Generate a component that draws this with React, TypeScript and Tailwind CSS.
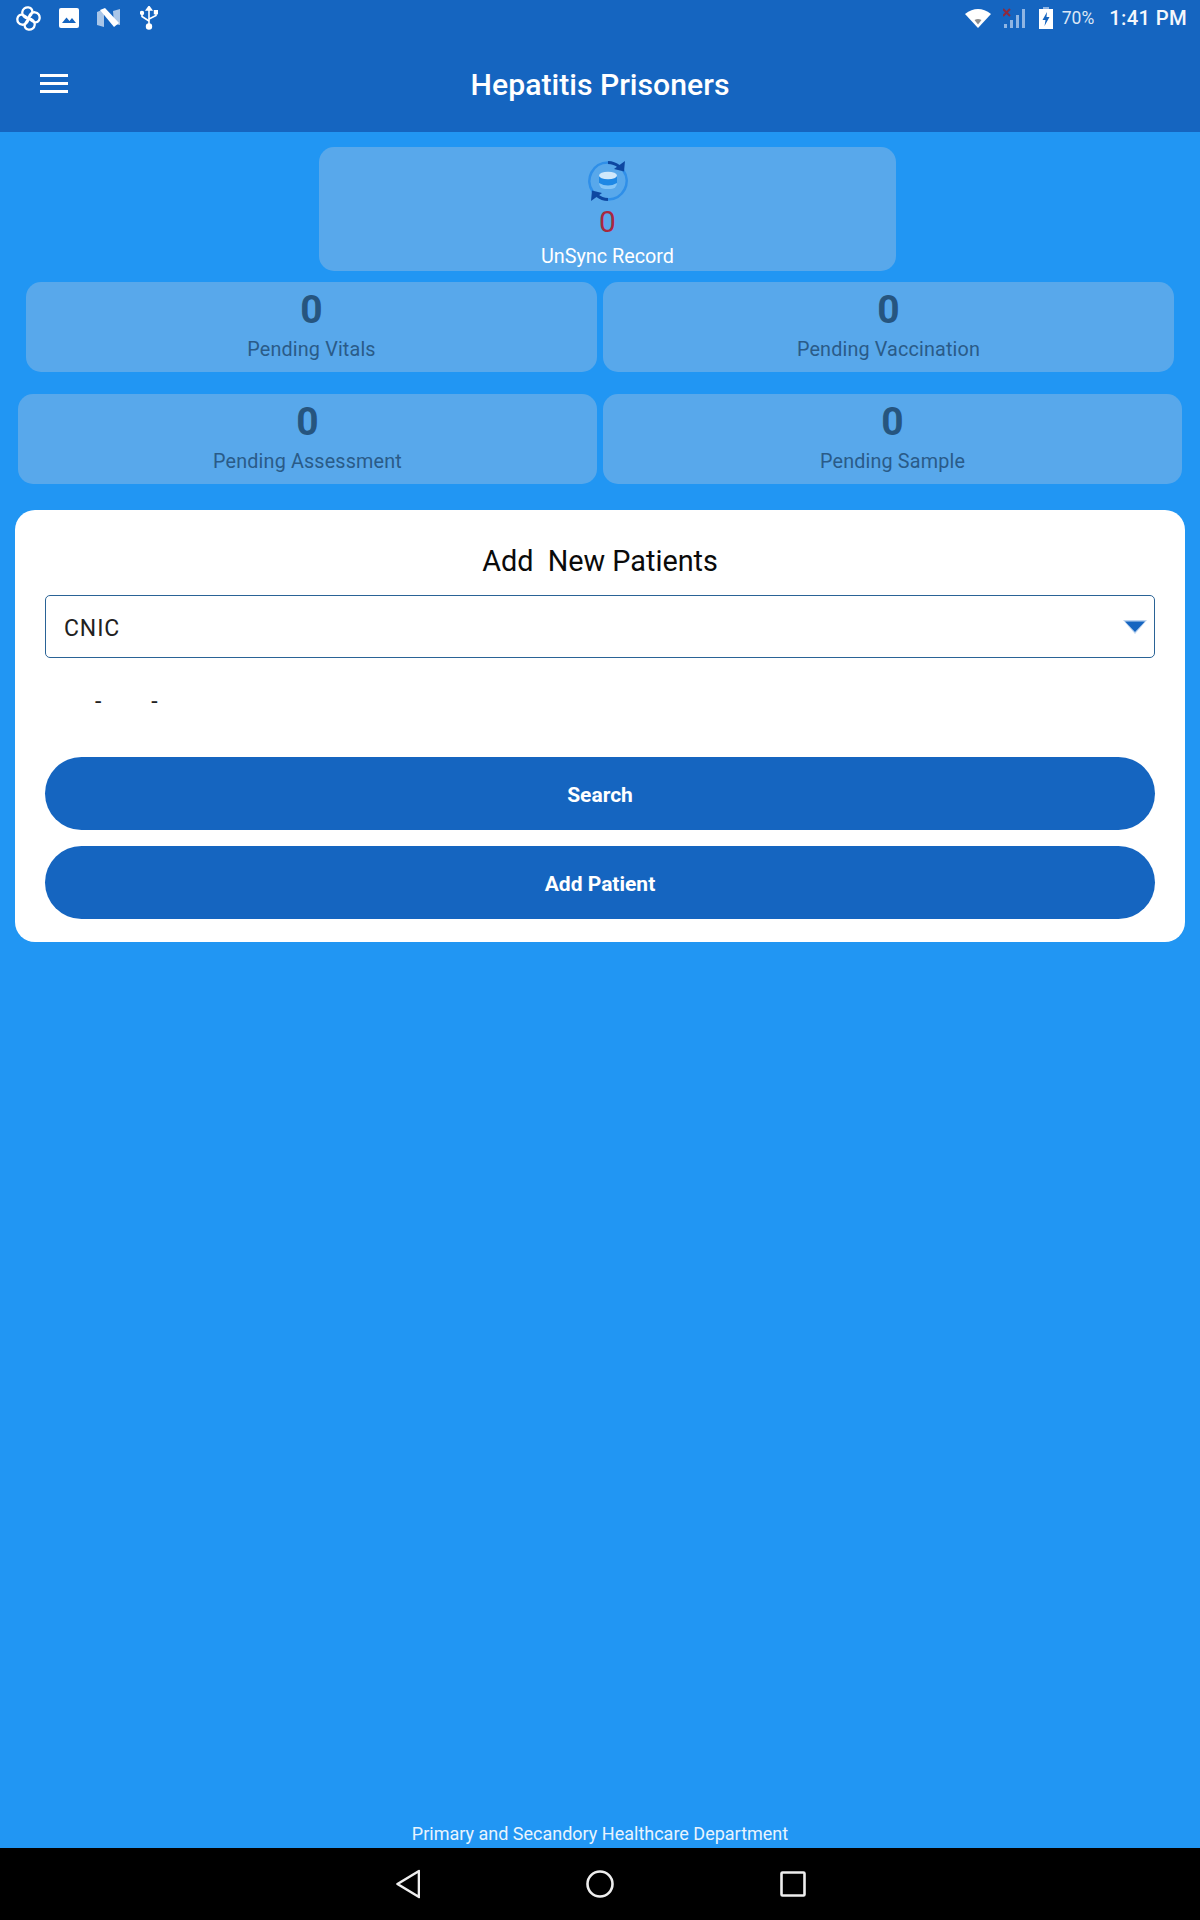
import React from "react";

const font = { fontFamily: "Roboto, 'Liberation Sans', sans-serif" };

function StatCard({ label, className }: { label: string; className: string }) {
  return (
    <div className={`h-[90px] rounded-[15px] bg-[#58a8eb] flex flex-col items-center ${className}`}>
      <div className="text-[39px] leading-[44px] font-bold text-[#26557f] mt-[6px]">0</div>
      <div className="text-[19.800px] leading-[24px] tracking-[0.15px] text-[#2a5b88] mt-[6px]">{label}</div>
    </div>
  );
}

function PinwheelIcon() {
  const blade = "M12.500 12.500 C8.500 12 6 9.500 6.300 6 C6.600 2.800 9.500 1 12.500 1.400 C15.500 1.800 17 4.500 16 7 C15.300 8.800 13.800 10.500 12.500 12.500 Z";
  return (
    <svg width="25" height="25" viewBox="0 0 25 25" fill="none" stroke="white" strokeWidth="2.300" strokeLinejoin="round">
      <path d={blade} />
      <path d={blade} transform="rotate(90 12.500 12.500)" />
      <path d={blade} transform="rotate(180 12.500 12.500)" />
      <path d={blade} transform="rotate(270 12.500 12.500)" />
    </svg>
  );
}

function SyncIcon() {
  return (
    <svg width="40" height="40" viewBox="0 0 40 40" fill="none">
      <path d="M5 31 A18.500 18.500 0 0 1 20 1.500" stroke="#2f8fe8" strokeWidth="2.600" />
      <path d="M35 9 A18.500 18.500 0 0 1 20 38.500" stroke="#2f8fe8" strokeWidth="2.600" />
      <path d="M20 1.500 A18.500 18.500 0 0 1 31 5.500" stroke="#0d47a1" strokeWidth="3" />
      <path d="M20 38.500 A18.500 18.500 0 0 1 9 34.500" stroke="#0d47a1" strokeWidth="3" />
      <path d="M37 0 L36 10.500 L26 8 Z" fill="#0d47a1" />
      <path d="M3 40 L4 29.500 L14 32 Z" fill="#0d47a1" />
      <rect x="11" y="14" width="18" height="14" rx="6" fill="#86c6f7" />
      <path d="M11 15 Q20 21 29 15 V22 Q20 27 11 22 Z" fill="#1e88e5" />
      <ellipse cx="20" cy="14.500" rx="9" ry="3.800" fill="#cfe8fb" />
    </svg>
  );
}

export default function App() {
  return (
    <div style={font} className="w-[1200px] h-[1920px] flex flex-col bg-[#2196f3] overflow-hidden">
      <header className="h-[132px] bg-[#1565c0] flex flex-col shrink-0">
        <div className="h-[36px] flex items-center pl-[16px] pr-[13px] text-white">
          <PinwheelIcon />
          <svg className="ml-[18px]" width="20" height="20" viewBox="0 0 20 20">
            <rect width="20" height="20" rx="2" fill="white" />
            <path d="M3 15 L7.500 9.500 L10.500 13 L13 10 L17 15 Z" fill="#1565c0" />
          </svg>
          <svg className="ml-[18px]" width="23" height="20" viewBox="0 0 23 20">
            <path d="M0 4 L7 1 V19 L0 17 Z" fill="#a9c6e8" />
            <path d="M16 3 L23 1 V17 L17 16 Z" fill="#a9c6e8" />
            <path d="M3 2 L8 0 L22 15 L17 19 Z" fill="white" />
          </svg>
          <svg className="ml-[20px]" width="18" height="24" viewBox="0 0 18 24" fill="none" stroke="white" strokeWidth="1.600">
            <path d="M9 2 V20" />
            <path d="M6.500 4 L9 0.500 L11.500 4 Z" fill="white" />
            <path d="M2 8 V10.500 L9 15" />
            <path d="M16 7 V9.500 L9 13" />
            <circle cx="2" cy="7" r="1.400" fill="white" />
            <rect x="14.600" y="4.800" width="2.800" height="2.800" fill="white" />
            <circle cx="9" cy="20.500" r="2.400" fill="white" />
          </svg>
          <div className="ml-auto flex items-center">
            <svg width="26" height="20" viewBox="0 0 26 20">
              <path d="M0 6 Q13 -4 26 6 L13 20 Z" fill="white" />
              <path d="M9.500 12 Q13 10 16.500 12 L13 16.500 Z" fill="#8d8d8d" />
            </svg>
            <svg className="ml-[12px]" width="22" height="22" viewBox="0 0 22 22">
              <rect x="1" y="17" width="3" height="4" fill="#8fb5e3" />
              <rect x="7" y="13" width="3" height="8" fill="#8fb5e3" />
              <rect x="13" y="8" width="3" height="13" fill="#8fb5e3" />
              <rect x="19" y="2" width="3" height="19" fill="#8fb5e3" />
              <path d="M0 2 L7 9 M7 2 L0 9" stroke="#8e2a3e" strokeWidth="2" />
            </svg>
            <svg className="ml-[14px]" width="14" height="22" viewBox="0 0 14 22">
              <rect x="4" y="0" width="6" height="3" fill="#8fb5e3" />
              <rect x="0" y="2" width="14" height="20" fill="white" />
              <path d="M8 5 L3.500 13 H6.500 L5.500 19 L10.500 10 H7.500 Z" fill="#1565c0" />
            </svg>
            <span className="ml-[9px] text-[17.500px] leading-[20px] text-[#dbe7f6]">70%</span>
            <span className="ml-[15px] text-[20.300px] leading-[20px] tracking-[0.3px] font-medium text-[#f4f7fc]">1:41 PM</span>
          </div>
        </div>
        <div className="flex-1 relative flex items-center justify-center pt-[1px]">
          <div className="absolute left-[40px] top-[38px] w-[28px] flex flex-col gap-[5px]">
            <div className="h-[3px] bg-white" />
            <div className="h-[3px] bg-white" />
            <div className="h-[3px] bg-white" />
          </div>
          <h1 className="text-[30.200px] leading-[32px] font-medium text-white">Hepatitis Prisoners</h1>
        </div>
      </header>

      <main className="flex-1 flex flex-col">
        <div className="mt-[15px] ml-[319px] w-[577px] h-[124px] rounded-[15px] bg-[#58a8eb] flex flex-col items-center">
          <div className="mt-[14px] h-[40px]"><SyncIcon /></div>
          <div className="text-[30px] leading-[32px] text-[#a8283f] mt-[5px]">0</div>
          <div className="text-[19.800px] leading-[24px] text-white mt-[7px]">UnSync Record</div>
        </div>

        <div className="mt-[11px] flex gap-[6px] pl-[26px] pr-[26px]">
          <StatCard label="Pending Vitals" className="flex-1" />
          <StatCard label="Pending Vaccination" className="flex-1" />
        </div>

        <div className="mt-[22px] flex gap-[6px] pl-[18px] pr-[18px]">
          <StatCard label="Pending Assessment" className="flex-1" />
          <StatCard label="Pending Sample" className="flex-1" />
        </div>

        <section className="mt-[26px] mx-[15px] h-[432px] rounded-[20px] bg-white px-[30px] flex flex-col">
          <h2 className="mt-[32px] text-center text-[28.800px] leading-[38px] text-[#0a0a0a] whitespace-pre">Add  New Patients</h2>
          <div className="mt-[15px] h-[63px] rounded-[5px] border border-[#2a6396] flex items-center pl-[18px] pr-[7px]">
            <span className="text-[23px] tracking-[0.9px] text-[#212121] pt-[5px]">CNIC</span>
            <svg className="ml-auto" width="24" height="16" viewBox="0 0 24 16">
              <path d="M0 1 H24 L12 15 Z" fill="#bcd4f0" />
              <path d="M2 2.500 H22 L12 13 Z" fill="#1565c0" />
            </svg>
          </div>
          <div className="mt-[33px] h-[22px] flex items-center text-[23px] text-[#212121]">
            <span className="ml-[50px]">-</span>
            <span className="ml-[50px]">-</span>
          </div>
          <button className="mt-[44px] h-[73px] pt-[4px] rounded-full bg-[#1565c0] text-white text-[21px] font-bold">Search</button>
          <button className="mt-[16px] h-[73px] pt-[4px] rounded-full bg-[#1565c0] text-white text-[21px] font-bold">Add Patient</button>
        </section>

        <footer className="mt-auto h-[25px] text-center text-[18px] leading-[22px] text-[#e8f4fe]">
          Primary and Secandory Healthcare Department
        </footer>
      </main>

      <nav className="h-[72px] bg-black shrink-0 flex items-center justify-center pl-[1px]">
        <svg width="24" height="30" viewBox="0 0 24 30" fill="none" stroke="#eeeeee" strokeWidth="2.600" strokeLinejoin="round">
          <path d="M1.500 15 L23 2 V28 Z" />
        </svg>
        <svg className="ml-[166px]" width="28" height="28" viewBox="0 0 28 28" fill="none" stroke="#eeeeee" strokeWidth="2.600">
          <circle cx="14" cy="14" r="12.500" />
        </svg>
        <svg className="ml-[166px]" width="26" height="26" viewBox="0 0 26 26" fill="none" stroke="#eeeeee" strokeWidth="2.600" strokeLinejoin="round">
          <rect x="1.500" y="1.500" width="23" height="23" rx="1" />
        </svg>
      </nav>
    </div>
  );
}
